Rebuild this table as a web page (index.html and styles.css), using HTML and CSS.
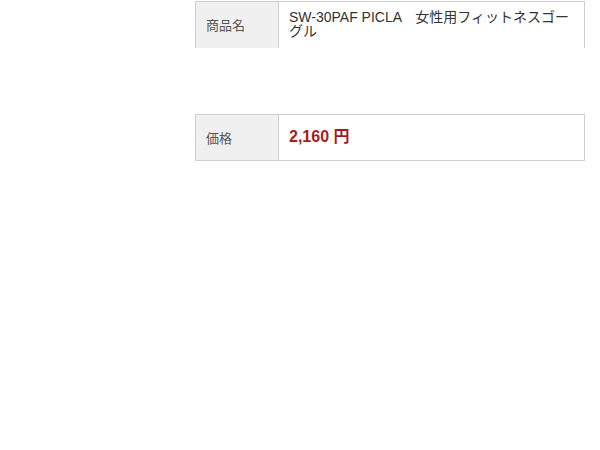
FILE: index.html
```html
<!DOCTYPE html>
<html lang="ja">
<head>
    <meta charset="UTF-8">
    <title>商品詳細</title>
    <link rel="stylesheet" href="styles.css">
</head>
<body>
    <div class="wrap">
        <table class="spec spec-name">
            <tr>
                <th>商品名</th>
                <td>SW-30PAF PICLA　女性用フィットネスゴーグル</td>
            </tr>
        </table>

        <table class="spec spec-price">
            <tr>
                <th>価格</th>
                <td><span class="price">2,160 円</span></td>
            </tr>
        </table>
    </div>
</body>
</html>
```

FILE: styles.css
```css
* {
    margin: 0;
    padding: 0;
    box-sizing: border-box;
}

body {
    font-family: "Liberation Sans", "Noto Sans CJK JP", sans-serif;
    color: #333;
    background: #fff;
}

.wrap {
    width: 390px;
    margin-left: 195px;
    padding-top: 1px;
}

.spec {
    width: 100%;
    border-collapse: collapse;
    table-layout: fixed;
}

.spec th,
.spec td {
    border: 1px solid #cfcfcf;
    height: 46px;
    vertical-align: middle;
    text-align: left;
    padding: 0 10px;
}

.spec th {
    width: 83px;
    background: #f0f0f0;
    font-weight: normal;
    font-size: 13px;
    color: #555;
}

.spec td {
    font-size: 14px;
    line-height: 14px;
}

.spec-name th,
.spec-name td {
    border-bottom: none;
    height: 46px;
    padding-bottom: 1px;
}

.spec-price {
    margin-top: 66px;
}

.price {
    font-size: 16px;
    font-weight: bold;
    color: #a81c1c;
    line-height: 18px;
}
```
